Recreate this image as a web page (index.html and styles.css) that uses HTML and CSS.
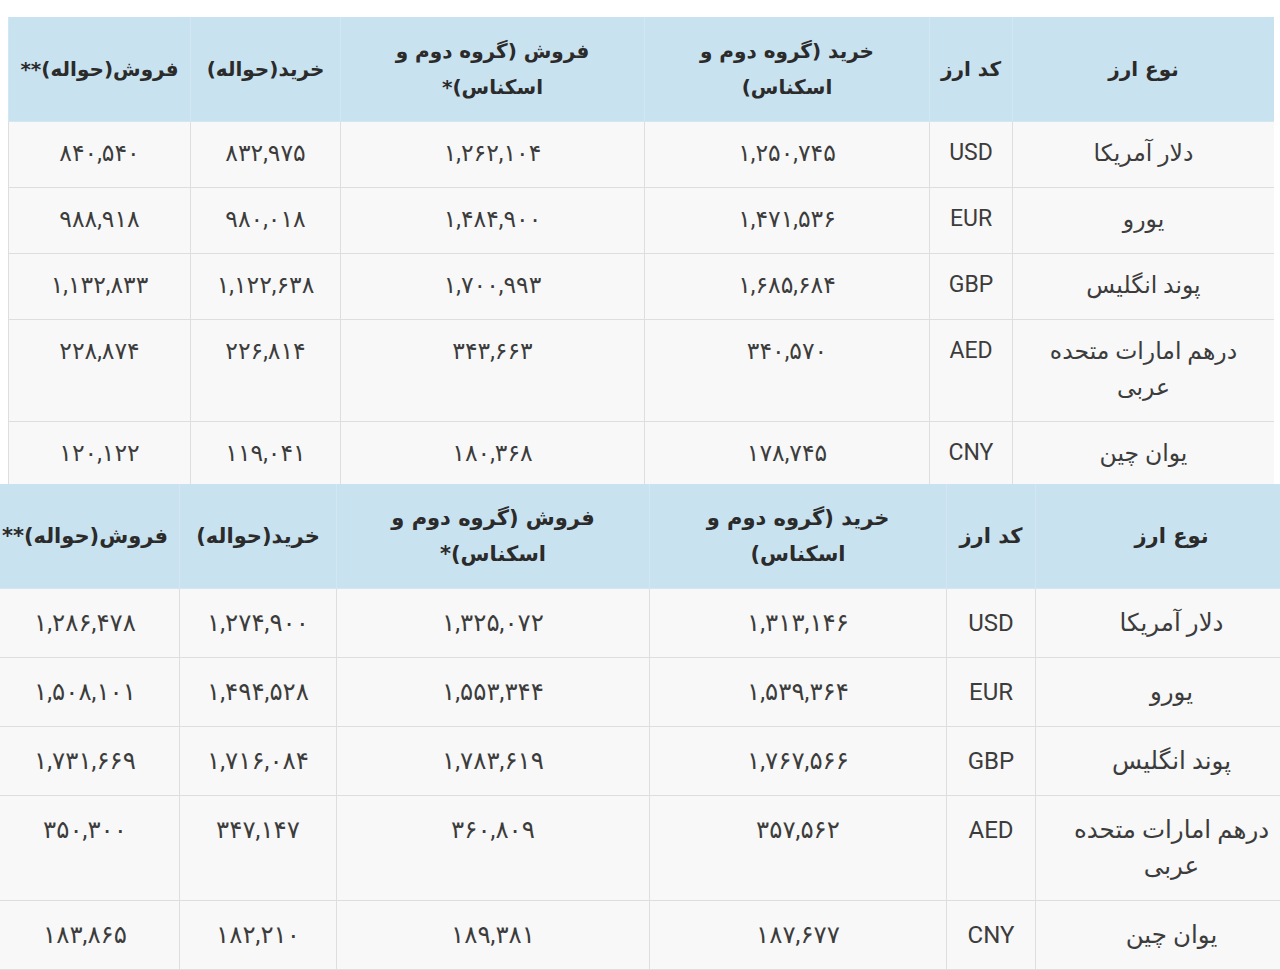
FILE: index.html
```html
<!DOCTYPE html>
<html lang="fa">
<head>
<meta charset="utf-8">
<title>نرخ ارز</title>
<link rel="stylesheet" href="styles.css">
</head>
<body>
<div class="page">
  <div class="sheet sheet-a">
    <table class="rates" dir="rtl">
      <colgroup>
        <col class="a-name"><col class="a-code"><col class="a-buy"><col class="a-sell"><col class="a-tbuy"><col class="a-tsell">
      </colgroup>
      <thead>
        <tr>
          <th>نوع ارز</th>
          <th>کد ارز</th>
          <th>خرید (گروه دوم و<br>اسکناس)</th>
          <th>فروش (گروه دوم و<br>اسکناس)*</th>
          <th>خرید(حواله)</th>
          <th>فروش(حواله)**</th>
        </tr>
      </thead>
      <tbody>
        <tr><td>دلار آمریکا</td><td class="code">USD</td><td>۱,۲۵۰,۷۴۵</td><td>۱,۲۶۲,۱۰۴</td><td>۸۳۲,۹۷۵</td><td>۸۴۰,۵۴۰</td></tr>
        <tr><td>یورو</td><td class="code">EUR</td><td>۱,۴۷۱,۵۳۶</td><td>۱,۴۸۴,۹۰۰</td><td>۹۸۰,۰۱۸</td><td>۹۸۸,۹۱۸</td></tr>
        <tr><td>پوند انگلیس</td><td class="code">GBP</td><td>۱,۶۸۵,۶۸۴</td><td>۱,۷۰۰,۹۹۳</td><td>۱,۱۲۲,۶۳۸</td><td>۱,۱۳۲,۸۳۳</td></tr>
        <tr><td>درهم امارات متحده<br>عربی</td><td class="code">AED</td><td>۳۴۰,۵۷۰</td><td>۳۴۳,۶۶۳</td><td>۲۲۶,۸۱۴</td><td>۲۲۸,۸۷۴</td></tr>
        <tr><td>یوان چین</td><td class="code">CNY</td><td>۱۷۸,۷۴۵</td><td>۱۸۰,۳۶۸</td><td>۱۱۹,۰۴۱</td><td>۱۲۰,۱۲۲</td></tr>
      </tbody>
    </table>
  </div>
  <div class="sheet sheet-b">
    <table class="rates" dir="rtl">
      <colgroup>
        <col class="b-name"><col class="b-code"><col class="b-buy"><col class="b-sell"><col class="b-tbuy"><col class="b-tsell">
      </colgroup>
      <thead>
        <tr>
          <th>نوع ارز</th>
          <th>کد ارز</th>
          <th>خرید (گروه دوم و<br>اسکناس)</th>
          <th>فروش (گروه دوم و<br>اسکناس)*</th>
          <th>خرید(حواله)</th>
          <th>فروش(حواله)**</th>
        </tr>
      </thead>
      <tbody>
        <tr><td>دلار آمریکا</td><td class="code">USD</td><td>۱,۳۱۳,۱۴۶</td><td>۱,۳۲۵,۰۷۲</td><td>۱,۲۷۴,۹۰۰</td><td>۱,۲۸۶,۴۷۸</td></tr>
        <tr><td>یورو</td><td class="code">EUR</td><td>۱,۵۳۹,۳۶۴</td><td>۱,۵۵۳,۳۴۴</td><td>۱,۴۹۴,۵۲۸</td><td>۱,۵۰۸,۱۰۱</td></tr>
        <tr><td>پوند انگلیس</td><td class="code">GBP</td><td>۱,۷۶۷,۵۶۶</td><td>۱,۷۸۳,۶۱۹</td><td>۱,۷۱۶,۰۸۴</td><td>۱,۷۳۱,۶۶۹</td></tr>
        <tr><td>درهم امارات متحده<br>عربی</td><td class="code">AED</td><td>۳۵۷,۵۶۲</td><td>۳۶۰,۸۰۹</td><td>۳۴۷,۱۴۷</td><td>۳۵۰,۳۰۰</td></tr>
        <tr><td>یوان چین</td><td class="code">CNY</td><td>۱۸۷,۶۷۷</td><td>۱۸۹,۳۸۱</td><td>۱۸۲,۲۱۰</td><td>۱۸۳,۸۶۵</td></tr>
      </tbody>
    </table>
  </div>
</div>
</body>
</html>
```
FILE: styles.css
```css
html, body {
  margin: 0;
  padding: 0;
  background: #ffffff;
}

body {
  width: 1280px;
  height: 970px;
  overflow: hidden;
  font-family: Roboto, "DejaVu Sans", sans-serif;
}

.page {
  width: 1280px;
  height: 970px;
  overflow: hidden;
}

.sheet {
  overflow: hidden;
}

.sheet-a {
  margin: 17px 0 0 8px;
  width: 1266px;
  height: 467px;
}

.sheet-b {
  margin-left: -10px;
  width: 1317px;
  height: 486px;
}

.rates {
  width: 100%;
  border-collapse: collapse;
  table-layout: fixed;
  direction: rtl;
}

.rates th {
  background: #c9e2f0;
  color: #2b2b2b;
  font-family: "DejaVu Sans", sans-serif;
  font-weight: bold;
  text-align: center;
  vertical-align: middle;
  border: 1px solid #d3e7f3;
  border-top: 0;
  padding: 0 6px;
  line-height: 36px;
}

.rates td {
  background: #f8f8f8;
  color: #3c3c3c;
  text-align: center;
  vertical-align: top;
  border: 1px solid #dedede;
  line-height: 36px;
  padding-left: 6px;
  padding-right: 6px;
  white-space: nowrap;
}

.rates td.code {
  font-family: Roboto, sans-serif;
}

/* first sheet */
.sheet-a th {
  height: 104px;
  font-size: 20px;
}

.sheet-a td {
  font-size: 23.5px;
  padding-top: 13px;
  padding-bottom: 16px;
}

.sheet-a td.code {
  font-size: 23px;
}

.a-name { width: 262px; }
.a-code { width: 83px; }
.a-buy { width: 285px; }
.a-sell { width: 304px; }
.a-tbuy { width: 150px; }
.a-tsell { width: 182px; }

/* second sheet */
.sheet-b th {
  height: 104px;
  font-size: 21px;
}

.sheet-b td {
  font-size: 24.5px;
  padding-top: 16px;
  padding-bottom: 16px;
}

.sheet-b td.code {
  font-size: 24px;
}

.b-name { width: 272px; }
.b-code { width: 89px; }
.b-buy { width: 297px; }
.b-sell { width: 313px; }
.b-tbuy { width: 157px; }
.b-tsell { width: 189px; }
```
